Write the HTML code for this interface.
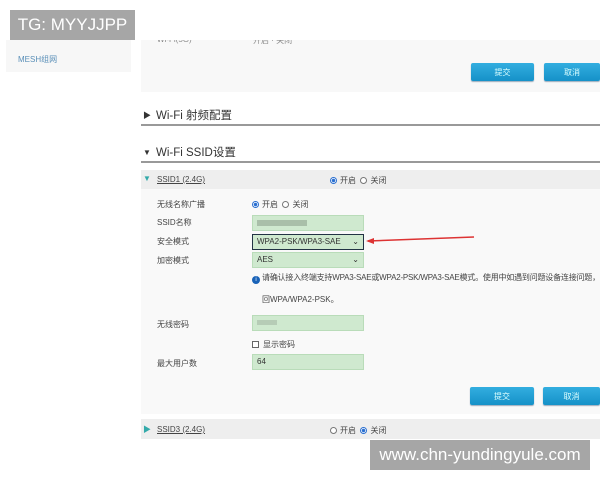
<!DOCTYPE html>
<html><head><meta charset="utf-8"><style>
*{margin:0;padding:0;box-sizing:border-box}
body{width:600px;height:480px;background:#fff;position:relative;overflow:hidden;font-family:"Liberation Sans","Noto Sans CJK SC",sans-serif;color:#333}
.a{position:absolute;white-space:nowrap}
.wm{background:#a6a6a6;color:#fff;font-size:17px;display:flex;align-items:center;justify-content:center}
.btn{position:absolute;height:18px;background:linear-gradient(#33aee0,#1591c8);border-radius:2px;color:#dff;font-size:8px;display:flex;align-items:center;justify-content:center;box-shadow:0 1px 1px #9ab}
.lbl{position:absolute;left:157px;font-size:8px;color:#444}
.inp{position:absolute;left:252px;width:112px;height:16px;background:#cfe9cf;border:1px solid #b9dcb9;font-size:8px;padding-left:4px;line-height:14px;color:#333}
.rad{display:inline-block;width:7px;height:7px;border-radius:50%;border:1px solid #777;vertical-align:-1px;margin-right:3px;background:#fff}
.on{border-color:#2a6fd0;background:radial-gradient(#2a6fd0 45%,#fff 55%)}
.sm{font-size:8px;color:#444}
.h{font-size:11.5px;color:#333}
.h b{font-size:8px;font-weight:normal;display:inline-block;width:13px;vertical-align:1px}
</style></head><body>
<div class="a" style="left:6px;top:40px;width:125px;height:32px;background:#f7f7f7"></div>
<div class="a" style="left:18px;top:54px;font-size:8px;color:#5a8fb8">MESH组网</div>
<div class="a" style="left:141px;top:40px;width:459px;height:52px;background:#f8f8f8;overflow:hidden">
<div class="a sm" style="left:16px;top:-5px;color:#888">Wi-Fi(5G)</div>
<div class="a sm" style="left:112px;top:-5px;color:#888">开启 · 关闭</div>
</div>
<div class="btn" style="left:471px;top:63px;width:63px">提交</div>
<div class="btn" style="left:544px;top:63px;width:56px">取消</div>
<div class="a h" style="left:143px;top:107px"><b>▶</b>Wi-Fi 射频配置</div>
<div class="a" style="left:141px;top:124px;width:459px;height:2px;background:#999"></div>
<div class="a h" style="left:143px;top:144px"><b>▼</b>Wi-Fi SSID设置</div>
<div class="a" style="left:141px;top:161px;width:459px;height:2px;background:#999"></div>
<div class="a" style="left:141px;top:170px;width:459px;height:19px;background:#eee"></div>
<div class="a" style="left:143px;top:174px;font-size:8px;color:#3aa">▼</div>
<div class="a sm" style="left:157px;top:175px;text-decoration:underline">SSID1 (2.4G)</div>
<div class="a sm" style="left:330px;top:175px"><span class="rad on"></span>开启 &nbsp;<span class="rad"></span>关闭</div>
<div class="a" style="left:141px;top:189px;width:459px;height:225px;background:#f9f9f9"></div>
<div class="lbl" style="top:199px">无线名称广播</div>
<div class="a sm" style="left:252px;top:199px"><span class="rad on"></span>开启 &nbsp;<span class="rad"></span>关闭</div>
<div class="lbl" style="top:217px">SSID名称</div>
<div class="inp" style="top:215px"><span style="display:inline-block;width:50px;height:6px;background:#a9bfa9;margin-top:4px"></span></div>
<div class="lbl" style="top:236px">安全模式</div>
<div class="inp" style="top:234px;border:1.5px solid #234;">WPA2-PSK/WPA3-SAE<span style="position:absolute;right:4px">⌄</span></div>
<div class="lbl" style="top:255px">加密模式</div>
<div class="inp" style="top:252px">AES<span style="position:absolute;right:4px">⌄</span></div>
<svg class="a" style="left:364px;top:234px" width="112" height="12"><path d="M4 7 L110 3" stroke="#d33" stroke-width="1.5"/><path d="M2 7 L10 4 L10 10 Z" fill="#d33"/></svg>
<div class="a sm" style="left:252px;top:272px;letter-spacing:-0.2px"><span style="display:inline-block;width:8px;height:8px;border-radius:50%;background:#1a63b8;color:#fff;font-size:6px;text-align:center;line-height:8px;vertical-align:-1px">i</span> 请确认接入终端支持WPA3-SAE或WPA2-PSK/WPA3-SAE模式。使用中如遇到问题设备连接问题，建</div>
<div class="a sm" style="left:262px;top:294px">回WPA/WPA2-PSK。</div>
<div class="lbl" style="top:319px">无线密码</div>
<div class="inp" style="top:315px"><span style="display:inline-block;width:20px;height:5px;background:#b6ccb6;margin-top:4px"></span></div>
<div class="a sm" style="left:252px;top:339px"><span style="display:inline-block;width:7px;height:7px;border:1px solid #666;background:#fff;vertical-align:-1px;margin-right:4px"></span>显示密码</div>
<div class="lbl" style="top:358px">最大用户数</div>
<div class="inp" style="top:354px">64</div>
<div class="btn" style="left:470px;top:387px;width:64px">提交</div>
<div class="btn" style="left:543px;top:387px;width:57px">取消</div>
<div class="a" style="left:141px;top:419px;width:459px;height:20px;background:#eee"></div>
<div class="a" style="left:143px;top:424px;font-size:8px;color:#3aa">▶</div>
<div class="a sm" style="left:157px;top:425px;text-decoration:underline">SSID3 (2.4G)</div>
<div class="a sm" style="left:330px;top:425px"><span class="rad"></span>开启 &nbsp;<span class="rad on"></span>关闭</div>
<div class="a wm" style="left:10px;top:10px;width:125px;height:30px">TG: MYYJJPP</div>
<div class="a wm" style="left:370px;top:440px;width:220px;height:30px">www.chn-yundingyule.com</div>
</body></html>
